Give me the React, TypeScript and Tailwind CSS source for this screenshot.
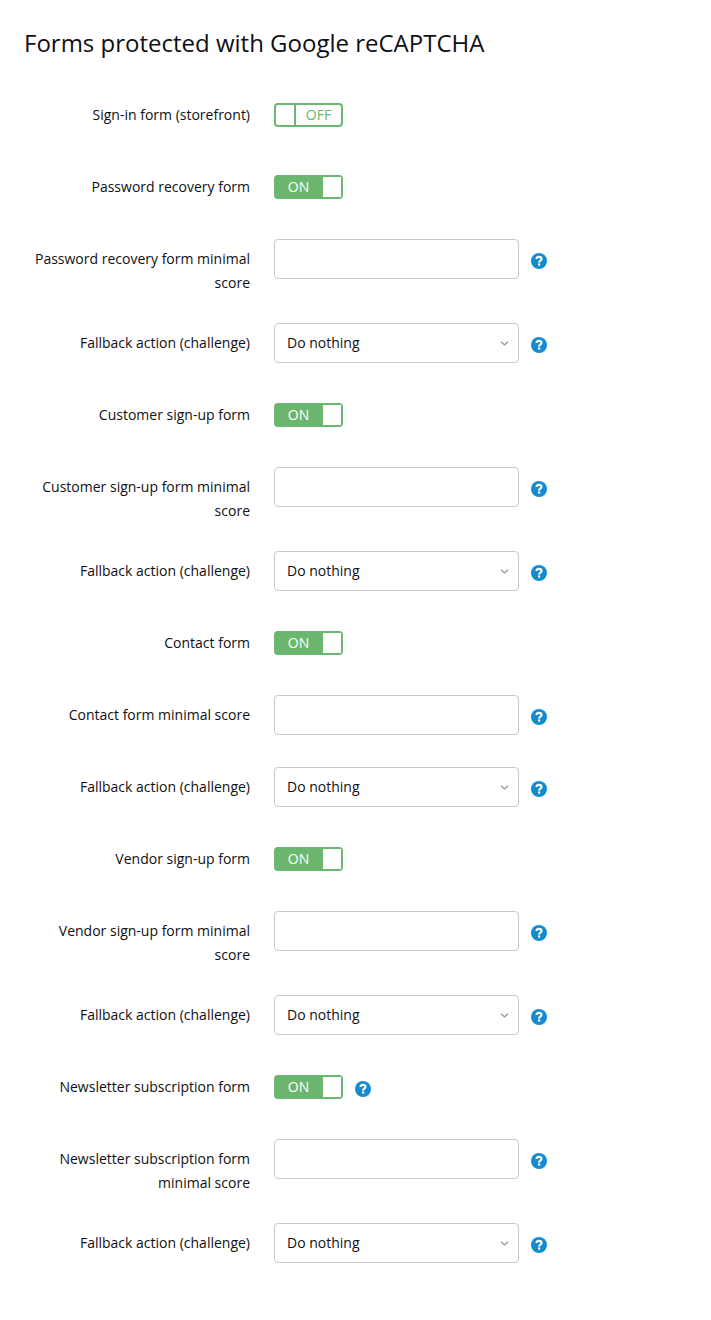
type Field = { label: string; kind: "off" | "on" | "input" | "select"; help?: boolean; tall?: boolean };

const fields: Field[] = [
  { label: "Sign-in form (storefront)", kind: "off" },
  { label: "Password recovery form", kind: "on" },
  { label: "Password recovery form minimal score", kind: "input", help: true, tall: true },
  { label: "Fallback action (challenge)", kind: "select", help: true },
  { label: "Customer sign-up form", kind: "on" },
  { label: "Customer sign-up form minimal score", kind: "input", help: true, tall: true },
  { label: "Fallback action (challenge)", kind: "select", help: true },
  { label: "Contact form", kind: "on" },
  { label: "Contact form minimal score", kind: "input", help: true },
  { label: "Fallback action (challenge)", kind: "select", help: true },
  { label: "Vendor sign-up form", kind: "on" },
  { label: "Vendor sign-up form minimal score", kind: "input", help: true, tall: true },
  { label: "Fallback action (challenge)", kind: "select", help: true },
  { label: "Newsletter subscription form", kind: "on", help: true },
  { label: "Newsletter subscription form minimal score", kind: "input", help: true, tall: true },
  { label: "Fallback action (challenge)", kind: "select", help: true },
];

function Toggle({ on }: { on: boolean }) {
  return on ? (
    <button className="flex h-6 w-[69px] rounded-[4px] border-2 border-[#6cb770] bg-[#6cb770] text-sm leading-5 text-white">
      <span className="w-[47px] pr-[2px] text-center">ON</span>
      <span className="h-5 flex-1 bg-white" />
    </button>
  ) : (
    <button className="flex h-6 w-[69px] rounded-[4px] border-2 border-[#6cb770] bg-white text-sm leading-5 text-[#6cb770]">
      <span className="h-5 w-5 border-r-2 border-[#6cb770]" />
      <span className="flex-1 text-center">OFF</span>
    </button>
  );
}

function Help() {
  return (
    <svg className="ml-3 mt-[14px] size-4 shrink-0" viewBox="0 0 16 16" fill="none">
      <circle cx="8" cy="8" r="8" fill="#128bd3" />
      <path d="M5.5 6C5.6 4.5 6.5 3.9 8 3.9s2.5.8 2.5 2c0 1.7-2.4 1.6-2.4 3.5" stroke="#fff" strokeWidth="2.1" />
      <path d="M7 10.4H9.2V12.6H7Z" fill="#fff" />
    </svg>
  );
}

export default function App() {
  return (
    <main className="h-[1320px] w-[711px] bg-white pt-[27px] font-['Open_Sans',sans-serif] text-sm text-[#0f0f14]">
      <h1 className="mb-9 ml-6 text-2xl leading-8">Forms protected with Google reCAPTCHA</h1>
      <div className="flex flex-col">
        {fields.map((f, i) => (
          <div key={i} className={f.tall ? "flex h-[84px]" : "flex h-[72px]"}>
            <label className="mr-6 w-[250px] pl-6 pt-2 text-right leading-6">{f.label}</label>
            {(f.kind === "on" || f.kind === "off") && (
              <div className="pt-2">
                <Toggle on={f.kind === "on"} />
              </div>
            )}
            {f.kind === "input" && (
              <input aria-label={f.label} className="h-10 w-[245px] rounded-[4px] border border-[#c8c8c8] px-3" />
            )}
            {f.kind === "select" && (
              <button className="flex h-10 w-[245px] items-center justify-between rounded-[4px] border border-[#c8c8c8] pl-3 pr-[9px]">
                <span>Do nothing</span>
                <svg className="mt-px h-[5px] w-[9px]" viewBox="0 0 9 5" fill="none" stroke="#92929e" strokeWidth="1.2">
                  <path d="M1 .7 4.5 4 8 .7" />
                </svg>
              </button>
            )}
            {f.help && <Help />}
          </div>
        ))}
      </div>
    </main>
  );
}
